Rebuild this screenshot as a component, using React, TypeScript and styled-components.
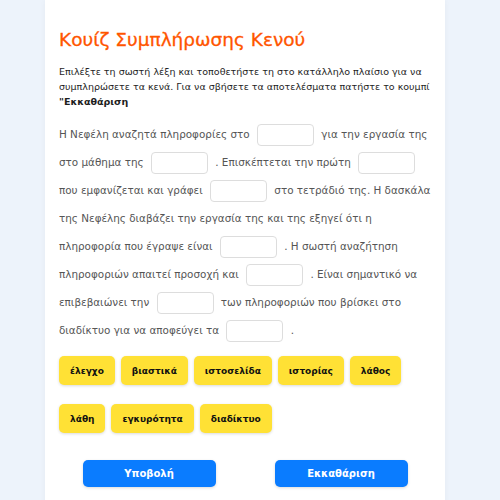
import React from "react"
import styled, { createGlobalStyle } from "styled-components"

const GlobalStyle = createGlobalStyle`
    html, body {
        margin: 0;
        padding: 0;
        background: #edf3fb;
    }
    body {
        font-family: "DejaVu Sans", "Liberation Sans", sans-serif;
    }
`

const Page = styled.div`
    display: flex;
    padding-left: 45px;
    min-height: 500px;
`

const Card = styled.div`
    width: 400px;
    box-sizing: border-box;
    background: #ffffff;
    padding: 28px 14px 20px 14px;
    box-shadow: 0 0 6px rgba(0, 0, 0, 0.04);
`

const Title = styled.h1`
    margin: 0;
    font-size: 18.5px;
    line-height: 24px;
    font-weight: normal;
    color: #ff5500;
    -webkit-text-stroke: 0.3px #ff5500;
    font-family: "DejaVu Sans", sans-serif;
`

const Instructions = styled.p`
    margin: 12px 0 0 0;
    font-size: 9.5px;
    line-height: 15px;
    color: #1e1e1e;
`

const Text = styled.div`
    margin-top: 11px;
    font-size: 10.4px;
    line-height: 28px;
    color: #555;
`

const Blank = styled.span`
    display: inline-block;
    vertical-align: middle;
    width: 55px;
    height: 20px;
    margin: 0 4px;
    border: 1px solid #dddddd;
    border-radius: 4px;
    background: #fff;
`

const Words = styled.div`
    display: flex;
    flex-wrap: wrap;
    column-gap: 6px;
    row-gap: 19px;
    margin-top: 12px;
    width: 345px;
`

const Word = styled.div`
    height: 29px;
    padding: 0 11px;
    display: flex;
    align-items: center;
    background: #ffe135;
    border-radius: 5px;
    box-shadow: 0 1px 3px rgba(0, 0, 0, 0.15);
    font-size: 9px;
    font-weight: bold;
    color: #111;
`

const Actions = styled.div`
    display: flex;
    justify-content: center;
    gap: 59px;
    margin-top: 27px;
`

const Button = styled.button`
    width: 133px;
    height: 27px;
    border: none;
    border-radius: 5px;
    background: #0a7cff;
    color: #fff;
    font-family: "DejaVu Sans", sans-serif;
    font-size: 10px;
    font-weight: bold;
    box-shadow: 0 1px 3px rgba(0, 0, 0, 0.15);
    cursor: pointer;
`

const words = ["έλεγχο", "βιαστικά", "ιστοσελίδα", "ιστορίας", "λάθος", "λάθη", "εγκυρότητα", "διαδίκτυο"]

export default function App() {
    return (
        <>
            <GlobalStyle />
            <Page>
                <Card>
                    <Title>Κουίζ Συμπλήρωσης Κενού</Title>
                    <Instructions>
                        Επιλέξτε τη σωστή λέξη και τοποθετήστε τη στο κατάλληλο πλαίσιο για να
                        συμπληρώσετε τα κενά. Για να σβήσετε τα αποτελέσματα πατήστε το κουμπί{" "}
                        <b>"Εκκαθάριση</b>
                    </Instructions>
                    <Text>
                        Η Νεφέλη αναζητά πληροφορίες στο <Blank /> για την εργασία της
                        στο μάθημα της <Blank /> . Επισκέπτεται την πρώτη <Blank />
                        {" "}που εμφανίζεται και γράφει <Blank /> στο τετράδιό της. Η δασκάλα
                        της Νεφέλης διαβάζει την εργασία της και της εξηγεί ότι η
                        πληροφορία που έγραψε είναι <Blank /> . Η σωστή αναζήτηση
                        πληροφοριών απαιτεί προσοχή και <Blank /> . Είναι σημαντικό να
                        επιβεβαιώνει την <Blank /> των πληροφοριών που βρίσκει στο
                        διαδίκτυο για να αποφεύγει τα <Blank /> .
                    </Text>
                    <Words>
                        {words.map(w => <Word key={w}>{w}</Word>)}
                    </Words>
                    <Actions>
                        <Button>Υποβολή</Button>
                        <Button>Εκκαθάριση</Button>
                    </Actions>
                </Card>
            </Page>
        </>
    )
}
